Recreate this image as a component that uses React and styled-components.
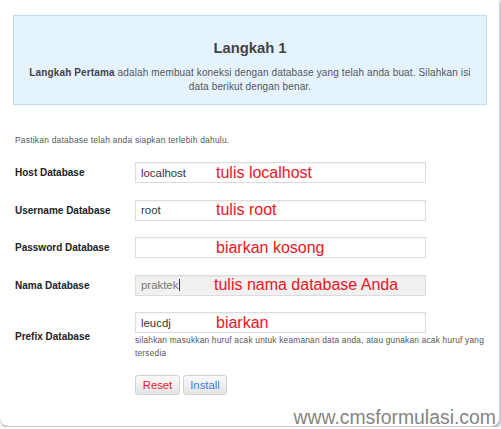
import React from "react";
import styled, { createGlobalStyle } from "styled-components";

const Global = createGlobalStyle`
  html, body { margin: 0; padding: 0; background: #ffffff; }
  body { font-family: "Liberation Sans", Arial, sans-serif; }
  * { box-sizing: border-box; }
`;

const Panel = styled.div`
  position: relative;
  width: 500px;
  height: 427px;
  padding-top: 15px;
  background: #fff;
  border-right: 1px solid #d4d4d4;
  border-bottom: 1px solid #c9c9c9;
  border-bottom-left-radius: 9px;
  border-bottom-right-radius: 9px;
  box-shadow: 1px 2px 3px rgba(70, 110, 140, 0.55);
  overflow: hidden;
`;

const InfoBox = styled.div`
  margin: 0 13px 0 13px;
  width: 474px;
  height: 90px;
  padding: 23px 12px 0;
  background: #e5f3ff;
  border: 1px solid #bcdcf8;
  text-align: center;
`;

const Title = styled.h2`
  margin: 0;
  font-size: 14.8px;
  line-height: 18px;
  font-weight: bold;
  color: #444;
`;

const Lead = styled.p`
  margin: 9px 0 0;
  font-size: 10px;
  letter-spacing: 0.13px;
  line-height: 14px;
  color: #555;
  b { color: #444; }
`;

const Note = styled.p`
  margin: 30px 0 0 15px;
  font-size: 8.4px;
  letter-spacing: 0.25px;
  line-height: 10px;
  color: #555;
`;

const Form = styled.div`
  display: grid;
  grid-template-columns: 120px 291px;
  row-gap: 16.5px;
  align-items: center;
  margin: 17px 0 0 15px;
`;

const Label = styled.label`
  font-size: 10px;
  font-weight: bold;
  color: #222;
`;

const Field = styled.div`
  position: relative;
`;

const Input = styled.div`
  height: 21px;
  padding-left: 5px;
  display: flex;
  align-items: center;
  font-size: 11.4px;
  color: ${p => (p.$muted ? "#777" : "#333")};
  background: ${p => (p.$muted ? "#f1f1f1" : "#fff")};
  border: 1px solid #dcdcdc;
  box-shadow: inset 0 1px 1px rgba(0, 0, 0, 0.04);
`;

const Caret = styled.span`
  display: inline-block;
  width: 1px;
  height: 12px;
  margin-left: 1px;
  background: #333;
`;

const Annot = styled.span`
  position: absolute;
  left: ${p => p.$left || 81}px;
  top: 50%;
  transform: translateY(-50%);
  font-size: 16px;
  color: #f0141e;
  white-space: nowrap;
  line-height: 1;
`;

const Help = styled.div`
  margin-top: 1px;
  width: 352px;
  font-size: 8.3px;
  letter-spacing: 0.22px;
  line-height: 13px;
  color: #555;
`;

const Buttons = styled.div`
  grid-column: 2;
  display: flex;
  gap: 3px;
  margin-top: -1.5px;
`;

const Button = styled.button`
  height: 20px;
  width: ${p => p.$w}px;
  padding: 0;
  font-family: "Liberation Sans", Arial, sans-serif;
  font-size: 11.3px;
  color: ${p => p.$color};
  background: linear-gradient(#fafafa, #e4e4e4);
  border: 1px solid #d2d2d2;
  border-radius: 3px;
`;

const Watermark = styled.div`
  position: absolute;
  right: 3px;
  top: 408px;
  font-size: 19.4px;
  line-height: 1;
  color: #858585;
  text-shadow: 0 0 1px #fff, 1px 1px 0 #fff;
`;

export default function App() {
  return (
    <>
      <Global />
      <Panel>
        <InfoBox>
          <Title>Langkah 1</Title>
          <Lead>
            <b>Langkah Pertama</b> adalah membuat koneksi dengan database yang telah anda buat. Silahkan isi data berikut dengan benar.
          </Lead>
        </InfoBox>
        <Note>Pastikan database telah anda siapkan terlebih dahulu.</Note>
        <Form>
          <Label>Host Database</Label>
          <Field>
            <Input>localhost</Input>
            <Annot>tulis localhost</Annot>
          </Field>
          <Label>Username Database</Label>
          <Field>
            <Input>root</Input>
            <Annot>tulis root</Annot>
          </Field>
          <Label>Password Database</Label>
          <Field>
            <Input />
            <Annot>biarkan kosong</Annot>
          </Field>
          <Label>Nama Database</Label>
          <Field>
            <Input $muted>
              praktek<Caret />
            </Input>
            <Annot $left={79}>tulis nama database Anda</Annot>
          </Field>
          <Label>Prefix Database</Label>
          <div>
            <Field>
              <Input>leucdj</Input>
              <Annot>biarkan</Annot>
            </Field>
            <Help>
              silahkan masukkan huruf acak untuk keamanan data anda, atau gunakan acak huruf yang tersedia
            </Help>
          </div>
          <Buttons>
            <Button $w={45} $color="#e8192c">Reset</Button>
            <Button $w={44} $color="#3b7fe4">Install</Button>
          </Buttons>
        </Form>
        <Watermark>www.cmsformulasi.com</Watermark>
      </Panel>
    </>
  );
}
